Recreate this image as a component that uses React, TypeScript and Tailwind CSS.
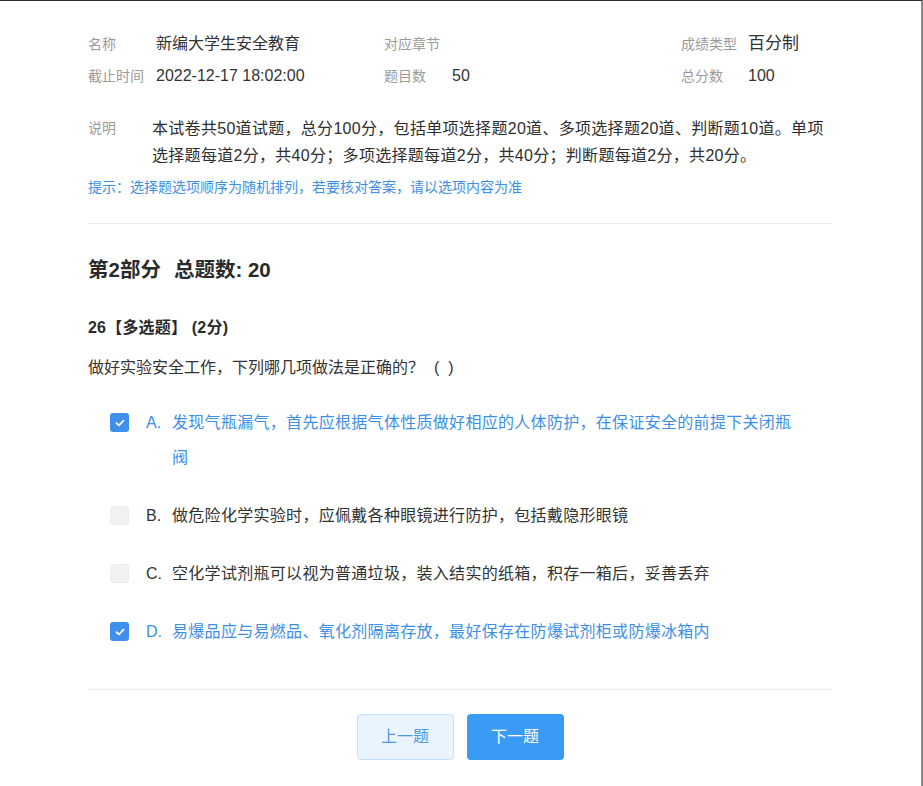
import React from "react";

const FONT = { fontFamily: '"Liberation Sans", "Noto Sans CJK SC", sans-serif' };

function Check({ checked }: { checked: boolean }) {
  return checked ? (
    <div className="w-[19px] h-[19px] rounded-[3px] bg-[#3f8fec] flex items-center justify-center shrink-0">
      <svg width="10" height="8" viewBox="0 0 10 8" fill="none">
        <path d="M1.5 4.2 L4 6.4 L8.5 1.6" stroke="white" strokeWidth="1.8" strokeLinecap="round" strokeLinejoin="round" />
      </svg>
    </div>
  ) : (
    <div className="w-[19px] h-[19px] rounded-[3px] bg-[#f1f1f1] border border-[#ececec] shrink-0" />
  );
}

const options = [
  { k: "A.", t: "发现气瓶漏气，首先应根据气体性质做好相应的人体防护，在保证安全的前提下关闭瓶阀", c: true },
  { k: "B.", t: "做危险化学实验时，应佩戴各种眼镜进行防护，包括戴隐形眼镜", c: false },
  { k: "C.", t: "空化学试剂瓶可以视为普通垃圾，装入结实的纸箱，积存一箱后，妥善丢弃", c: false },
  { k: "D.", t: "易爆品应与易燃品、氧化剂隔离存放，最好保存在防爆试剂柜或防爆冰箱内", c: true },
];

export default function App() {
  return (
    <div style={FONT} className="w-[923px] h-[786px] bg-white border-t border-[#2e2e2e] border-r-2 border-r-[#8c8c8c] overflow-hidden">
      <div className="ml-[88px] w-[744px] pt-[27px]">
        <div className="grid grid-cols-[296px_297px_1fr]">
          <div className="flex items-center h-[32px]">
            <span className="w-[68px] text-[14px] text-[#9a9a9a]">名称</span>
            <span className="text-[16px] text-[#333]">新编大学生安全教育</span>
          </div>
          <div className="flex items-center h-[32px]">
            <span className="w-[68px] text-[14px] text-[#9a9a9a]">对应章节</span>
          </div>
          <div className="flex items-center h-[32px]">
            <span className="w-[67px] text-[14px] text-[#9a9a9a]">成绩类型</span>
            <span className="text-[17px] text-[#333]">百分制</span>
          </div>
          <div className="flex items-center h-[32px]">
            <span className="w-[68px] text-[14px] text-[#9a9a9a]">截止时间</span>
            <span className="text-[16px] text-[#333]">2022-12-17 18:02:00</span>
          </div>
          <div className="flex items-center h-[32px]">
            <span className="w-[68px] text-[14px] text-[#9a9a9a]">题目数</span>
            <span className="text-[16px] text-[#333]">50</span>
          </div>
          <div className="flex items-center h-[32px]">
            <span className="w-[67px] text-[14px] text-[#9a9a9a]">总分数</span>
            <span className="text-[16px] text-[#333]">100</span>
          </div>
        </div>

        <div className="flex mt-[23px]">
          <span className="w-[64px] text-[14px] leading-[27px] text-[#9a9a9a] shrink-0">说明</span>
          <p className="text-[16px] leading-[27px] text-[#2e2e2e] w-[680px] tracking-[0.3px]">
            本试卷共50道试题，总分100分，包括单项选择题20道、多项选择题20道、判断题10道。单项选择题每道2分，共40分；多项选择题每道2分，共40分；判断题每道2分，共20分。
          </p>
        </div>
        <div className="mt-[8px] text-[14px] leading-[21px] text-[#3d8fe6]">
          提示：选择题选项顺序为随机排列，若要核对答案，请以选项内容为准
        </div>

        <div className="mt-[25px] h-px bg-[#ececec]" />

        <div className="mt-[32px] flex items-center gap-[13px] h-[28px] text-[20.5px] font-bold text-[#2a2a2a]">
          <span>第2部分</span>
          <span>总题数: 20</span>
        </div>

        <div className="mt-[33px] h-[22px] flex items-center text-[16px] font-bold text-[#2a2a2a] tracking-[0.2px]">
          26【多选题】 (2分)
        </div>

        <div className="mt-[17px] h-[24px] flex items-center text-[16px] text-[#333]">
          <span>做好实验安全工作，下列哪几项做法是正确的？</span>
          <span className="ml-[10px]">(&nbsp;&nbsp;)</span>
        </div>

        <div className="mt-[25px] pl-[22px] flex flex-col gap-[23px]">
          {options.map((o) => (
            <div key={o.k} className={"flex text-[16px] leading-[35px] " + (o.c ? "text-[#3d8fe6]" : "text-[#333]")}>
              <div className="h-[35px] flex items-center">
                <Check checked={o.c} />
              </div>
              <span className="ml-[17px] w-[26px] shrink-0">{o.k}</span>
              <span className="w-[620px] tracking-[0.3px]">{o.t}</span>
            </div>
          ))}
        </div>

        <div className="mt-[40px] h-px bg-[#ececec]" />

        <div className="mt-[24px] flex justify-center gap-[13px]">
          <button className="w-[97px] h-[46px] rounded-[4px] bg-[#eaf4ff] border border-[#c3e0fc] text-[16px] text-[#4a9ae8]">
            上一题
          </button>
          <button className="w-[97px] h-[46px] rounded-[4px] bg-[#3a9bf4] text-[16px] text-white">
            下一题
          </button>
        </div>
      </div>
    </div>
  );
}
